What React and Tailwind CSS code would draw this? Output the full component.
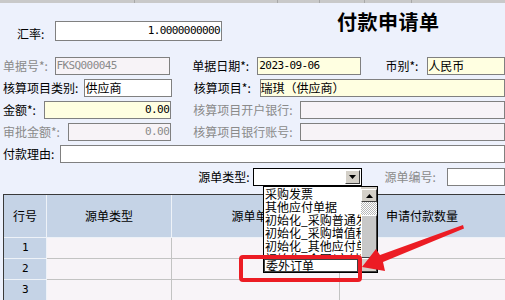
import React from "react";

const cjk = "font-['Noto_Sans_CJK_SC','Noto_Sans',sans-serif]";
const mono = "font-['DejaVu_Sans_Mono','Liberation_Mono',monospace] text-[11px] tracking-[-0.6px]";

function Box({ className = "", children }) {
  return (
    <div className={"h-[18px] border border-[#808080] flex items-center overflow-hidden whitespace-nowrap " + className}>
      {children}
    </div>
  );
}

function Label({ className = "", children }) {
  return (
    <div className={"h-[18px] flex items-center whitespace-nowrap text-[12px] leading-[18px] " + className}>
      {children}
    </div>
  );
}

export default function App() {
  const items = ["采购发票", "其他应付单据", "初始化_采购普通发票", "初始化_采购增值税发票", "初始化_其他应付单据"];
  return (
    <div className={"relative w-[505px] h-[300px] overflow-hidden bg-[#edf1fc] text-black " + cjk}>
      {/* top bar */}
      <div className="h-[3px] bg-[#c9c9c9] flex">
        <div className="w-[135px] border-r border-[#a8a8a8]" />
        <div className="w-[143px] border-r border-[#a8a8a8]" />
        <div className="w-[42px] border-r border-[#a8a8a8]" />
        <div className="w-[45px] border-r border-[#a8a8a8]" />
        <div className="w-[47px] border-r border-[#a8a8a8]" />
      </div>

      {/* Row A: exchange rate + title */}
      <div className="h-[54px] flex items-start">
        <Label className="w-[55px] pl-[17px] mt-[22px]">汇率:</Label>
        <div className="mt-[18px] w-[167px] h-[20px] border border-[#808080] bg-white flex items-center justify-end pr-[1px]">
          <span className={mono}>1.0000000000</span>
        </div>
        <div className="ml-[115px] mt-[7px] text-[20px] leading-[24px] font-bold tracking-[0.5px]">付款申请单</div>
      </div>

      {/* Row B */}
      <div className="flex h-[18px] mb-[4px]">
        <Label className="w-[56px] pl-[3px] text-[#8a8a8a]">单据号*:</Label>
        <Box className="w-[119px] bg-[#f7f3f7] pl-[1px]">
          <span className={mono + " text-[#8a8a8a]"}>FKSQ000045</span>
        </Box>
        <Label className="w-[89px] pl-[22px]">单据日期*:</Label>
        <Box className="w-[107px] bg-[#ffffe1] pl-[1px]">
          <span className={mono}>2023-09-06</span>
        </Box>
        <Label className="w-[67px] pl-[24px]">币别*:</Label>
        <Box className="w-[80px] bg-[#ffffe1] text-[12px]">人民币</Box>
      </div>

      {/* Row C */}
      <div className="flex h-[18px] mb-[4px]">
        <Label className="w-[86px] pl-[3px]">核算项目类别:</Label>
        <Box className="w-[89px] bg-white text-[12px]">供应商</Box>
        <Label className="w-[89px] pl-[22px]">核算项目*:</Label>
        <Box className="w-[250px] bg-[#ffffe1] text-[12px]">瑞琪（供应商）</Box>
      </div>

      {/* Row D */}
      <div className="flex h-[18px] mb-[4px]">
        <Label className="w-[45px] pl-[3px]">金额*:</Label>
        <Box className="w-[130px] bg-[#ffffe1] justify-end pr-[1px]">
          <span className={mono}>0.00</span>
        </Box>
        <Label className="w-[131px] pl-[22px] text-[#8a8a8a]">核算项目开户银行:</Label>
        <Box className="w-[210px] bg-[#f7f3f7]" />
      </div>

      {/* Row E */}
      <div className="flex h-[18px] mb-[4px]">
        <Label className="w-[69px] pl-[3px] text-[#8a8a8a]">审批金额*:</Label>
        <Box className="w-[106px] bg-[#f7f3f7] justify-end pr-[1px]">
          <span className={mono + " text-[#8a8a8a]"}>0.00</span>
        </Box>
        <Label className="w-[131px] pl-[22px] text-[#8a8a8a]">核算项目银行账号:</Label>
        <Box className="w-[210px] bg-[#f7f3f7]" />
      </div>

      {/* Row F */}
      <div className="flex h-[18px]">
        <Label className="w-[62px] pl-[3px]">付款理由:</Label>
        <Box className="w-[460px] bg-white" />
      </div>

      {/* Row G */}
      <div className="flex h-[18px] mt-[5px]">
        <Label className="w-[260px] justify-end pr-[3px]">源单类型:</Label>
        <div className="w-[113px] h-[18px] border border-black bg-white flex items-center justify-end pr-[1px]">
          <div className="w-[15px] h-[14px] bg-[#d4d0c8] border-t border-l border-white border-r border-b border-r-[#404040] border-b-[#404040] flex items-center justify-center">
            <svg width="7" height="4" viewBox="0 0 7 4"><polygon points="0,0 7,0 3.5,4" fill="#000" /></svg>
          </div>
        </div>
        <Label className="w-[86px] pl-[22px] text-[#8a8a8a]">源单编号:</Label>
        <Box className="w-[60px] bg-white" />
      </div>

      {/* Table */}
      <div className="mt-[8px] ml-[3px] border-l border-t border-[#3a3a3a] w-[520px]">
        <div className="grid grid-cols-[43px_125px_168px_184px] h-[43px] bg-[#c5d3e6] text-[12px]">
          <div className="flex items-center justify-center border-r border-b border-[#eef2f8]">行号</div>
          <div className="flex items-center justify-center border-r border-b border-[#eef2f8]">源单类型</div>
          <div className="flex items-center justify-center border-r border-b border-[#eef2f8]">源单单号</div>
          <div className="flex items-center pl-[46px] border-b border-[#eef2f8]">申请付款数量</div>
        </div>
        {["1", "2", "3"].map((n) => (
          <div key={n} className="grid grid-cols-[43px_125px_168px_184px] h-[21px]">
            <div className={"flex items-center justify-center bg-[#c5d3e6] border-r border-b border-[#eef2f8] " + mono}>{n}</div>
            <div className="bg-[#f8f4f8] border-r border-b border-[#c3c3c3]" />
            <div className="bg-[#f8f4f8] border-r border-b border-[#c3c3c3]" />
            <div className="bg-[#f8f4f8] border-b border-[#c3c3c3]" />
          </div>
        ))}
      </div>

      {/* Dropdown list (overlay) */}
      <div className="absolute left-[263px] top-[186px] w-[115px] h-[87px] bg-white border border-black flex overflow-hidden">
        <div className="flex-1 min-w-0 flex flex-col text-[12px] leading-[13px]">
          {items.map((t) => (
            <div key={t} className="h-[13px] pl-[1px] whitespace-nowrap overflow-x-clip">{t}</div>
          ))}
          <div className="h-[7px] pl-[1px] whitespace-nowrap overflow-hidden">初始化_合同(应付)</div>
          <div className="h-[14px] bg-white border border-[#404040] pl-[1px] whitespace-nowrap overflow-hidden leading-[12px] mr-[3px]">委外订单</div>
        </div>
        <div className="w-[16px] flex flex-col bg-[#d4d0c8]">
          <div className="mt-[2px] h-[13px] bg-[#d4d0c8] border-t border-l border-white border-r border-b border-r-[#404040] border-b-[#404040] flex items-center justify-center">
            <svg width="7" height="4" viewBox="0 0 7 4"><polygon points="0,4 7,4 3.5,0" fill="#000" /></svg>
          </div>
          <div className="h-[13px] bg-[repeating-conic-gradient(#b8b8b8_0%_25%,#ffffff_0%_50%)] bg-[length:2px_2px]" />
          <div className="flex-1 bg-[#c8c8c8] border-t border-l border-white border-r border-b border-r-[#404040] border-b-[#404040]" />
          <div className="h-[14px] bg-[#d4d0c8] border-t border-l border-white border-r border-b border-r-[#404040] border-b-[#404040] flex items-center justify-center">
            <svg width="7" height="4" viewBox="0 0 7 4"><polygon points="0,0 7,0 3.5,4" fill="#000" /></svg>
          </div>
        </div>
      </div>

      {/* Red annotation */}
      <svg className="absolute left-0 top-0 pointer-events-none" width="505" height="300" viewBox="0 0 505 300">
        <rect x="241" y="257" width="119" height="23" rx="2" fill="none" stroke="#ec1c24" strokeWidth="4" />
        <polygon
          points="362,267 376,249 380,255 463,225 464,228.5 383,262 385,271"
          fill="#ec1c24"
        />
      </svg>
    </div>
  );
}
